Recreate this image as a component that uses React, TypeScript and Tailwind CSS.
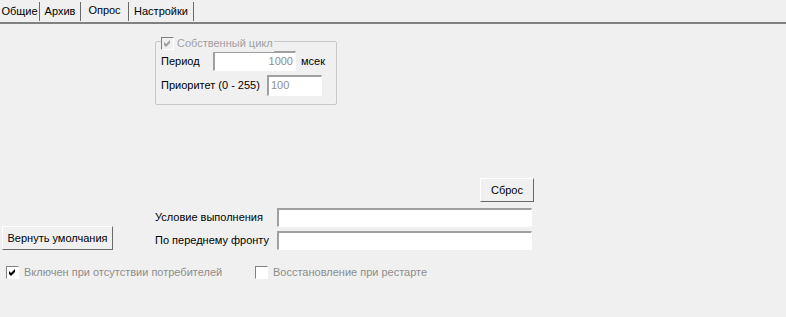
import React from "react"

const font = { fontFamily: '"Liberation Sans", Arial, sans-serif' }

function Sunken({ className, value, right }: { className: string; value?: string; right?: boolean }) {
  return (
    <div
      className={`shrink-0 border-t-2 border-l-2 border-b border-r border-t-[#a0a0a0] border-l-[#a0a0a0] border-b-white border-r-white bg-white text-[11px] leading-[16px] text-[#8d8d8d] px-[2px] ${right ? "text-right" : ""} ${className}`}
    >
      {value}
    </div>
  )
}

function Button({ label, className }: { label: string; className: string }) {
  return (
    <div
      className={`shrink-0 flex items-center justify-center whitespace-nowrap border border-t-white border-l-white border-r-[#696969] border-b-[#696969] bg-[#f0f0f0] text-[11px] text-black ${className}`}
    >
      {label}
    </div>
  )
}

function Check({ checked, disabled }: { checked: boolean; disabled?: boolean }) {
  return (
    <div
      className={`shrink-0 relative w-[13px] h-[13px] border border-t-[#808080] border-l-[#808080] border-b-white border-r-white ${disabled ? "bg-[#f0f0f0]" : "bg-white"}`}
    >
      {checked && (
        <svg viewBox="0 0 11 11" className="absolute left-0 top-0 w-[11px] h-[11px]">
          <path d="M2 4 L4 6 L8 2 L8 5 L4 9 L2 7 Z" fill={disabled ? "#a0a0a0" : "#000"} />
        </svg>
      )}
    </div>
  )
}

export default function App() {
  const tabs: [string, string][] = [
    ["Общие", "w-[40px]"],
    ["Архив", "w-[41px]"],
    ["Опрос", "w-[48px]"],
    ["Настройки", "w-[65px]"],
  ]
  return (
    <div className="w-[786px] h-[317px] bg-[#f0f0f0] overflow-hidden text-[11px] text-black" style={font}>
      {/* tab strip */}
      <div className="flex h-[24px] border-b-2 border-b-[#808080] items-start pt-[2px]">
        {tabs.map(([t, w], i) => (
          <div
            key={t}
            className={`${w} h-[19px] flex items-center justify-center whitespace-nowrap text-[11px] border-r border-r-[#696969] ${i === 2 ? "pb-[2px]" : ""}`}
          >
            {t}
          </div>
        ))}
      </div>

      {/* group box */}
      <div className="ml-[155px] mt-[17px] w-[182px] h-[64px] relative border border-[#c8c8c8] rounded-[2px]">
        <div className="absolute -top-[7px] left-[5px] flex items-center gap-[3px] bg-[#f0f0f0] pr-[1px] whitespace-nowrap">
          <Check checked disabled />
          <span className="text-[11px] text-[#a0a0a0]">Собственный цикл</span>
        </div>
        <div className="flex items-center mt-[9px] ml-[5px] whitespace-nowrap">
          <span className="w-[52px] shrink-0">Период</span>
          <Sunken className="w-[83px] h-[20px]" value="1000" right />
          <span className="ml-[5px]">мсек</span>
        </div>
        <div className="flex items-center mt-[4px] ml-[5px] whitespace-nowrap">
          <span className="w-[106px] shrink-0">Приоритет (0 - 255)</span>
          <Sunken className="w-[55px] h-[21px]" value="100" />
        </div>
      </div>

      <Button label="Сброс" className="ml-[480px] mt-[73px] w-[54px] h-[24px]" />

      <div className="flex mt-[6px]">
        <Button label="Вернуть умолчания" className="ml-[2px] mt-[18px] w-[111px] h-[24px]" />
        <div className="ml-[42px] flex flex-col gap-[4px]">
          <div className="flex items-center whitespace-nowrap">
            <span className="w-[122px] shrink-0">Условие выполнения</span>
            <Sunken className="w-[255px] h-[19px]" />
          </div>
          <div className="flex items-center whitespace-nowrap">
            <span className="w-[122px] shrink-0">По переднему фронту</span>
            <Sunken className="w-[255px] h-[19px]" />
          </div>
        </div>
      </div>

      <div className="flex items-center mt-[14px] text-[11px] text-[#8d8d8d] whitespace-nowrap">
        <div className="ml-[6px]">
          <Check checked />
        </div>
        <span className="ml-[5px] w-[231px]">Включен при отсутствии потребителей</span>
        <Check checked={false} />
        <span className="ml-[5px]">Восстановление при рестарте</span>
      </div>
    </div>
  )
}
